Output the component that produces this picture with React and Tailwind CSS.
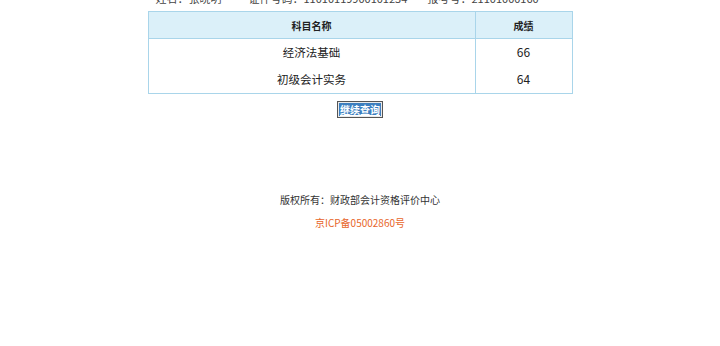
const scores = [
  { name: "经济法基础", score: 66 },
  { name: "初级会计实务", score: 64 },
];

const font = { fontFamily: '"Microsoft YaHei", "Noto Sans CJK SC", "Noto Sans", sans-serif' };

export default function App() {
  return (
    <div className="w-[720px] h-[346px] bg-white overflow-hidden text-[#333]" style={font}>
      {/* candidate info line, scrolled mostly out of view */}
      <div className="w-[425px] mx-auto -mt-[11px] h-[18px] flex items-center text-[11px] text-[#444] whitespace-nowrap">
        <span className="ml-[8px] w-[93px]">姓名：张晓明</span>
        <span className="w-[179px]">证件号码：11010119900101234</span>
        <span>报考号：21101000160</span>
      </div>

      <table className="w-[425px] mx-auto border-collapse border border-[#a9d5ea] mt-[4px]">
        <thead>
          <tr className="bg-[#dbf0f9] h-[27px]">
            <th className="text-[10px] font-bold text-[#222] border border-[#a9d5ea]">科目名称</th>
            <th className="w-[97px] text-[10px] font-bold text-[#222] border border-[#a9d5ea]">成绩</th>
          </tr>
        </thead>
        <tbody>
          {scores.map((s, i) => (
            <tr key={s.name} className={i === 0 ? "h-[27px]" : "h-[28px]"}>
              <td className="text-center text-[11.5px] text-[#222] border-l border-[#a9d5ea]">{s.name}</td>
              <td className="text-center text-[12px] text-[#222] border-l border-[#a9d5ea]">{s.score}</td>
            </tr>
          ))}
        </tbody>
      </table>

      <div className="flex justify-center mt-[7px]">
        <button className="h-[17px] px-[1px] border border-[#555] bg-[#eaeaea] flex items-center">
          <span className="bg-[#3d7fbf] text-white text-[10px] font-bold leading-[13px] px-[1px] underline">继续查询</span>
        </button>
      </div>

      <div className="mt-[74px] text-center text-[10px] text-[#333]">版权所有：财政部会计资格评价中心</div>
      <div className="mt-[8px] text-center text-[10px] text-[#e8662a]">京ICP备05002860号</div>
    </div>
  );
}
